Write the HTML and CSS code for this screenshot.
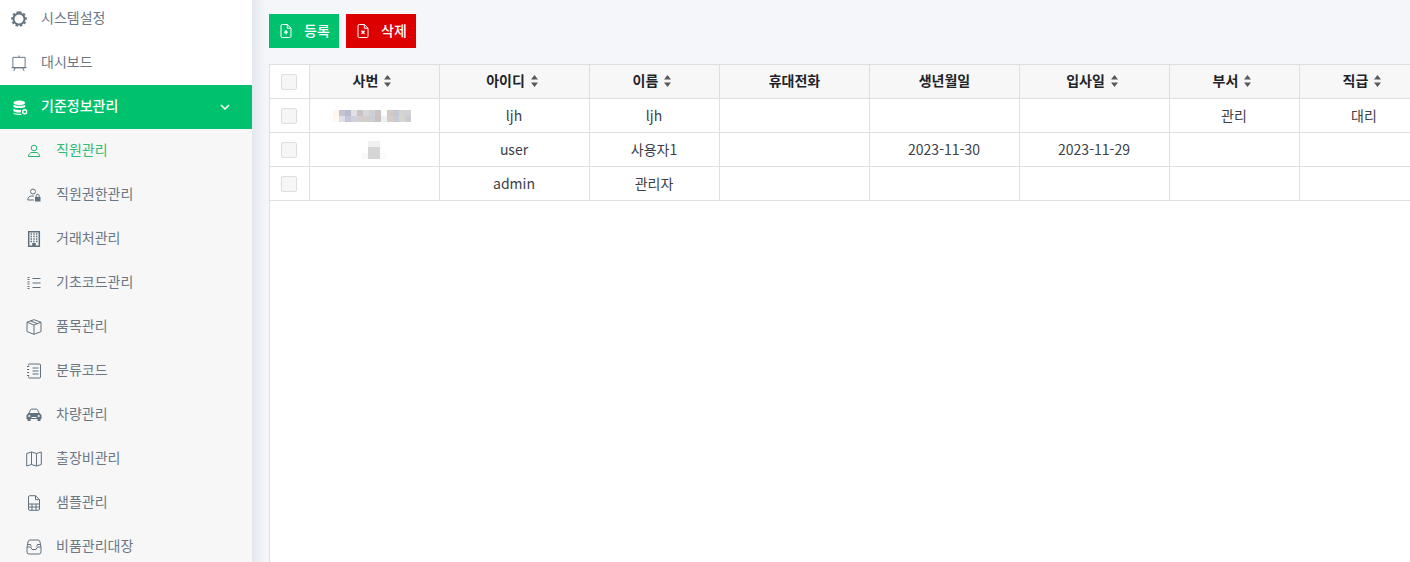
FILE: index.html
```html
<!DOCTYPE html>
<html lang="ko">
<head>
<meta charset="utf-8">
<title>직원관리</title>
<link rel="stylesheet" href="styles.css">
</head>
<body>
<div class="app">
  <aside class="sidebar">
    <ul class="menu">
      <li class="item"><svg class="ico" viewBox="0 0 16 16"><circle cx="8" cy="8" r="5.500" class="thick"/><path class="teeth" stroke-dasharray="2.600 1.980" d="M8 1a7 7 0 1 1 0 14a7 7 0 1 1 0-14"/></svg><span>시스템설정</span></li>
      <li class="item"><svg class="ico" viewBox="0 0 16 17"><path d="M1.500 2.500h13v11h-13zM0 13.500h16M4 13.500l-1.500 3.500M12 13.500l1.500 3.500M8 .5v2"/></svg><span>대시보드</span></li>
      <li class="item active"><svg class="ico db" viewBox="0 0 15 15"><path class="solid" d="M6.300.5c3.200 0 5.800 1 5.800 2.300s-2.600 2.300-5.800 2.300S.5 4.100.5 2.800 3.100.5 6.300.5zM.5 4.700c1.300 1.500 10.300 1.500 11.600 0v2.200c-.9 1-8 2-11.600 0zM.5 8.800c1.700 1.100 5 1.400 7.500 1v2.400c-3 .5-6.500 0-7.500-1.300zM.5 12.700c1.500 1 5 1.400 7.800 1l.5 1c-3 .4-7.300.2-8.300-.9z"/><circle class="ring" cx="11.700" cy="11.700" r="2"/></svg><span>기준정보관리</span><svg class="chev" viewBox="0 0 10 6"><path d="M1 1l4 4 4-4"/></svg></li>
      <li class="sub current"><svg class="ico small" viewBox="0 0 14 14"><circle cx="7" cy="4" r="2.800"/><path d="M1.500 12.500c0-2.500 1.500-4 3.500-4h4c2 0 3.500 1.500 3.500 4z"/></svg><span>직원관리</span></li>
      <li class="sub"><svg class="ico small" viewBox="0 0 14 14"><circle cx="6" cy="3.500" r="2.500"/><path d="M.8 12c0-2.500 1.500-4 3.500-4h2.500M.8 12h6"/><path class="solid" d="M8 9h5.500v4.500H8z"/><path d="M9.200 9V7.800a1.500 1.500 0 0 1 3 0V9"/></svg><span>직원권한관리</span></li>
      <li class="sub"><svg class="ico small tall" viewBox="0 0 14 16"><path class="frame" d="M1.700.8h10.600v14.400H1.700z"/><path class="cells" d="M3.500 3h7M3.500 5.500h7M3.500 8h7M3.500 10.500h7"/><path class="solid" d="M5.200 12h3.600v3.500H5.200z"/></svg><span>거래처관리</span></li>
      <li class="sub"><svg class="ico small" viewBox="0 0 14 14"><path d="M5.500 2.500h8M5.500 7h8M5.500 11.500h8"/><path class="dots" d="M.5 1.500h2.500M.5 3.500h2.500M.5 6h2.500M.5 8h2.500M.5 10.500h2.500M.5 12.500h2.500"/></svg><span>기초코드관리</span></li>
      <li class="sub"><svg class="ico" viewBox="0 0 16 16"><path d="M8 .7l7 2.500v9.400l-7 2.700-7-2.700V3.200zM1 3.200l7 2.800 7-2.800M8 6v9.300M4.500 1.900l7 2.800"/></svg><span>품목관리</span></li>
      <li class="sub"><svg class="ico" viewBox="0 0 16 16"><path d="M2.500 2.500V2q0-1 1-1h10q1 0 1 1v12q0 1-1 1h-10q-1 0-1-1v-.5M6.500 5h6M6.500 8h6M6.500 11h6"/><path class="dots" d="M1 3.500h3M1 6.500h3M1 9.500h3M1 12.500h3"/></svg><span>분류코드</span></li>
      <li class="sub"><svg class="ico" viewBox="0 0 16 16"><path d="M2.800 6.500l1.500-3.400q.4-1 1.400-1h4.600q1 0 1.400 1l1.500 3.400"/><path class="solid" d="M2.500 6h11L15.500 8v4h-15V8z"/><path class="solid" d="M1.500 12h3v2h-3zM11.500 12h3v2h-3z"/><path class="hole" d="M5.500 10h5v1h-5z"/><circle class="hole" cx="3.300" cy="9" r="1.100"/><circle class="hole" cx="12.700" cy="9" r="1.100"/></svg><span>차량관리</span></li>
      <li class="sub"><svg class="ico" viewBox="0 0 16 16"><path d="M.7 2.500l4.800-1.500 5 1.500 4.800-1.500v12.500l-4.800 1.500-5-1.500-4.800 1.500zM5.500 1v12.500M10.500 2.500V15"/></svg><span>출장비관리</span></li>
      <li class="sub"><svg class="ico small tall" viewBox="0 0 14 16"><path d="M1.500 14V2q0-1.300 1.300-1.300h5.700l4 4V14q0 1.300-1.300 1.300H2.800Q1.500 15.300 1.500 14zM8.500.7v4h4M1.500 9h11M1.500 12h11M5 9v6.300M9 9v6.300"/></svg><span>샘플관리</span></li>
      <li class="sub"><svg class="ico" viewBox="0 0 16 16"><path d="M1 8l1-5q.3-2 2-2h8q1.700 0 2 2l1 5v5q0 2-2 2H3q-2 0-2-2zM1 8h3.500l1.500 2.500h4L11.500 8H15M1 5.500h3M12 5.500h3M4 5l1.500 2.500M12 5l-1.500 2.500"/></svg><span>비품관리대장</span></li>
    </ul>
  </aside>
  <main class="main">
    <div class="toolbar">
      <button class="btn add"><svg class="btn-ico" viewBox="0 0 12 14"><path d="M1 1.800q0-1.300 1.300-1.300h5l3.700 3.700v8q0 1.300-1.300 1.300H2.300Q1 13.500 1 12.200zM7.300.5v3.700H11"/><path class="btn-mark" d="M4 8.200h4M6 6.200v4"/></svg><span>등록</span></button>
      <button class="btn del"><svg class="btn-ico" viewBox="0 0 12 14"><path d="M1 1.800q0-1.300 1.300-1.300h5l3.700 3.700v8q0 1.300-1.300 1.300H2.300Q1 13.500 1 12.200zM7.300.5v3.700H11"/><path class="btn-mark" d="M4.500 6.700l3 3M7.500 6.700l-3 3"/></svg><span>삭제</span></button>
    </div>
    <div class="panel">
      <table class="grid">
        <colgroup>
          <col class="c40"><col class="c130"><col class="c150"><col class="c130"><col class="c150"><col class="c150"><col class="c150"><col class="c130"><col class="c130">
        </colgroup>
        <thead>
          <tr>
            <th><i class="check"></i></th>
            <th>사번<svg class="sort" viewBox="0 0 7 12"><path d="M3.500 0l3.500 4.500H0zM3.500 12L0 7.500h7z"/></svg></th>
            <th>아이디<svg class="sort" viewBox="0 0 7 12"><path d="M3.500 0l3.500 4.500H0zM3.500 12L0 7.500h7z"/></svg></th>
            <th>이름<svg class="sort" viewBox="0 0 7 12"><path d="M3.500 0l3.500 4.500H0zM3.500 12L0 7.500h7z"/></svg></th>
            <th>휴대전화</th>
            <th>생년월일</th>
            <th>입사일<svg class="sort" viewBox="0 0 7 12"><path d="M3.500 0l3.500 4.500H0zM3.500 12L0 7.500h7z"/></svg></th>
            <th>부서<svg class="sort" viewBox="0 0 7 12"><path d="M3.500 0l3.500 4.500H0zM3.500 12L0 7.500h7z"/></svg></th>
            <th>직급<svg class="sort" viewBox="0 0 7 12"><path d="M3.500 0l3.500 4.500H0zM3.500 12L0 7.500h7z"/></svg></th>
          </tr>
        </thead>
        <tbody>
          <tr><td><i class="check"></i></td><td><i class="mosaic-a"></i></td><td>ljh</td><td>ljh</td><td></td><td></td><td></td><td>관리</td><td>대리</td></tr>
          <tr><td><i class="check"></i></td><td><i class="mosaic-b"></i></td><td>user</td><td>사용자1</td><td></td><td>2023-11-30</td><td>2023-11-29</td><td></td><td></td></tr>
          <tr><td><i class="check"></i></td><td></td><td>admin</td><td>관리자</td><td></td><td></td><td></td><td></td><td></td></tr>
        </tbody>
      </table>
    </div>
  </main>
</div>
</body>
</html>
```
FILE: styles.css
```css
* { box-sizing: border-box; }
html, body { margin: 0; height: 100%; overflow: hidden; }
body {
  font-family: "Noto Sans CJK KR", "Noto Sans", sans-serif;
  font-size: 14px;
  color: #3b4147;
  background: #f4f6fa;
}
.app { display: flex; height: 562px; overflow: hidden; }

.sidebar { flex: 0 0 252px; background: #f7f7f7; overflow: hidden; }
.menu { list-style: none; margin: -3px 0 0; padding: 0; }
.item, .sub {
  display: flex;
  align-items: center;
  height: 44px;
  color: #6b7883;
  line-height: 20px;
}
.item { padding-left: 11px; background: #fff; }
.item .ico { margin-right: 14px; }
.item .ico.db { width: 15px; height: 15px; margin-left: 2px; margin-right: 13px; }
.sub { padding-left: 26px; }
.sub .ico { margin-right: 14px; }
.sub .ico.small { width: 14px; margin-left: 1px; margin-right: 15px; }
.item span, .sub span { position: relative; top: -2px; }

.ico { width: 16px; height: 16px; flex: none; fill: none; stroke: #61717e; stroke-width: 1; }
.ico .thick { stroke-width: 2; }
.ico .teeth { stroke-width: 1.600; }
.ico .solid { fill: #61717e; stroke: none; }
.ico .hole { fill: #f7f7f7; stroke: none; }
.ico .dots { stroke-dasharray: 2 .8; stroke-width: 1; }
.ico .frame { stroke-width: 1.500; }
.ico .cells { stroke-width: 1.500; stroke-dasharray: 1.500 1.200; }

.item.active { background: #00c26e; color: #fff; font-weight: 500; }
.item.active .ico { stroke: #fff; }
.item.active .solid { fill: #fff; }
.item.active .ring { fill: #00c26e; stroke: #fff; stroke-width: 1.400; }
.chev { width: 10px; height: 6px; margin-left: auto; margin-right: 22px; fill: none; stroke: #fff; stroke-width: 1.500; }

.sub.current { color: #2dbd75; }
.sub.current .ico { stroke: #1fb56c; }

.main {
  flex: 1;
  min-width: 0;
  padding: 14px 0 0 17px;
  background: linear-gradient(to right, #e4e8ee 0, #f4f6fa 14px) no-repeat;
  display: flex;
  flex-direction: column;
  gap: 16px;
}
.toolbar { display: flex; gap: 7px; }
.btn {
  width: 70px;
  height: 34px;
  border: 0;
  padding: 0 0 0 11px;
  display: flex;
  align-items: center;
  gap: 12px;
  color: #fff;
  font: 500 14px "Noto Sans CJK KR", sans-serif;
}
.btn span { position: relative; top: -1px; }
.btn.add { background: #00c26e; }
.btn.del { background: #dd0000; }
.btn-ico { width: 12px; height: 14px; fill: none; stroke: #fff; stroke-width: 1; flex: none; }
.btn-mark { stroke-width: 1.300; }

.panel {
  flex: 1;
  background: #fff;
  border-left: 1px solid #dcdfe4;
  overflow: hidden;
  position: relative;
}
.grid { border-collapse: separate; border-spacing: 0; table-layout: fixed; width: 1161px; margin-left: -1px; }
.c40 { width: 41px; }
.c130 { width: 130px; }
.c150 { width: 150px; }
.grid th, .grid td {
  height: 34px;
  padding: 0 1px 2px 0;
  text-align: center;
  vertical-align: middle;
  border-right: 1px solid #dcdfe4;
  border-bottom: 1px solid #dcdfe4;
  line-height: 20px;
}
.grid th { border-top: 1px solid #dcdfe4; height: 35px; padding: 0 0 4px; background: #f7f7f7; color: #1f2429; font-weight: 700; }
.grid th:first-child, .grid td:first-child { background: #fff; padding-right: 0; }
.sort { width: 7px; height: 12px; margin: 0 5px 0 6px; fill: #595959; vertical-align: -1px; }
.check {
  display: block;
  width: 16px;
  height: 16px;
  margin: 0 auto;
  position: relative;
  top: 1px;
  background: #f5f6f5;
  border: 1px solid #dcdfe0;
  border-radius: 2px;
}
.grid th .check { top: 2px; }
.mosaic-a {
  display: block;
  width: 78px;
  height: 12px;
  margin-left: 23px;
  position: relative;
  top: 1px;
  background:
    linear-gradient(to right, #fff5ea 0 6px, #c2c4d2 6px 12px, #b9bace 12px 18px, #e3dfe8 18px 24px, #c9c3c2 24px 30px, #d6d7dc 30px 36px, #d0cfd6 36px 42px, #cbc4c2 42px 48px, #fbfdfd 48px 54px, #d4c9c6 54px 60px, #c4c6d3 60px 66px, #d6d3d6 66px 72px, #d2d1d4 72px 78px) top / 100% 6px no-repeat,
    linear-gradient(to right, #fff8f0 0 6px, #dde0e8 6px 12px, #c5c6d6 12px 18px, #cfd2da 18px 24px, #d4cfce 24px 30px, #d3cecc 30px 36px, #cfcdd4 36px 42px, #c9c2c0 42px 48px, #ecf1f4 48px 54px, #d6cdca 54px 60px, #c8cad6 60px 66px, #d6d5d0 66px 72px, #c9ccd0 72px 78px) bottom / 100% 6px no-repeat;
}
.mosaic-b {
  display: block;
  width: 24px;
  height: 18px;
  margin-left: 52px;
  position: relative;
  top: 1px;
  background:
    linear-gradient(#eff0f0, #eff0f0) 6px 0 / 12px 6px no-repeat,
    linear-gradient(#d5d6d3, #d5d6d3) 6px 6px / 12px 12px no-repeat,
    linear-gradient(#f8f9f9, #f8f9f9) 0 12px / 6px 6px no-repeat,
    linear-gradient(#f9fafb, #f9fafb) 18px 12px / 6px 6px no-repeat;
}
```
